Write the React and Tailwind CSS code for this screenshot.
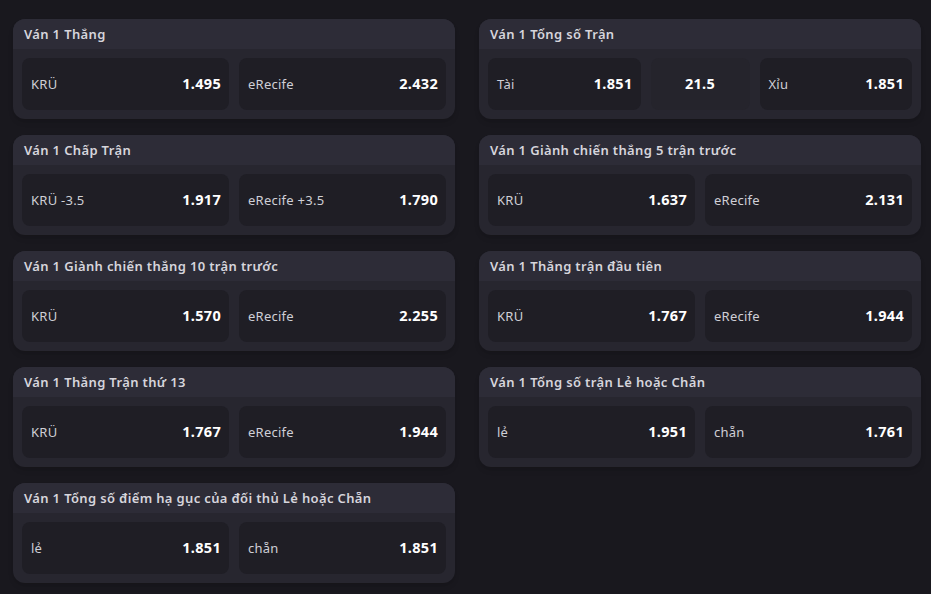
import React from "react";

const left = [
  {
    title: "Ván 1 Thắng",
    cells: [
      { label: "KRÜ", value: "1.495" },
      { label: "eRecife", value: "2.432" },
    ],
  },
  {
    title: "Ván 1 Chấp Trận",
    cells: [
      { label: "KRÜ -3.5", value: "1.917" },
      { label: "eRecife +3.5", value: "1.790" },
    ],
  },
  {
    title: "Ván 1 Giành chiến thắng 10 trận trước",
    cells: [
      { label: "KRÜ", value: "1.570" },
      { label: "eRecife", value: "2.255" },
    ],
  },
  {
    title: "Ván 1 Thắng Trận thứ 13",
    cells: [
      { label: "KRÜ", value: "1.767" },
      { label: "eRecife", value: "1.944" },
    ],
  },
  {
    title: "Ván 1 Tổng số điểm hạ gục của đối thủ Lẻ hoặc Chẵn",
    cells: [
      { label: "lẻ", value: "1.851" },
      { label: "chẵn", value: "1.851" },
    ],
  },
];

const right = [
  {
    title: "Ván 1 Tổng số Trận",
    cells: [
      { label: "Tài", value: "1.851" },
      { line: "21.5" },
      { label: "Xỉu", value: "1.851" },
    ],
  },
  {
    title: "Ván 1 Giành chiến thắng 5 trận trước",
    cells: [
      { label: "KRÜ", value: "1.637" },
      { label: "eRecife", value: "2.131" },
    ],
  },
  {
    title: "Ván 1 Thắng trận đầu tiên",
    cells: [
      { label: "KRÜ", value: "1.767" },
      { label: "eRecife", value: "1.944" },
    ],
  },
  {
    title: "Ván 1 Tổng số trận Lẻ hoặc Chẵn",
    cells: [
      { label: "lẻ", value: "1.951" },
      { label: "chẵn", value: "1.761" },
    ],
  },
];

const Market = ({ title, cells }) => (
  <div className="h-[100px] rounded-xl bg-[#27262f] overflow-hidden shadow-md">
    <div className="h-[30px] flex items-center pt-[2px] px-[11px] bg-[#2d2c37] text-[13px] font-semibold tracking-[0.35px] text-[#d6d5dc]">
      {title}
    </div>
    <div className="flex gap-[10px] p-[9px]">
      {cells.map((c, i) =>
        c.line ? (
          <div
            key={i}
            className="w-[99px] shrink-0 h-[52px] rounded-lg bg-[#25242c] flex items-center justify-center text-[14.5px] font-bold tracking-[0.3px] text-white"
          >
            {c.line}
          </div>
        ) : (
          <div
            key={i}
            className="flex-1 h-[52px] rounded-lg bg-[#1f1e25] flex items-center justify-between pl-[9px] pr-[8px]"
          >
            <span className="text-[13px] tracking-[0.25px] text-[#cfcfd6] pt-[1px]">{c.label}</span>
            <span className="text-[14.5px] font-bold tracking-[0.3px] text-white">{c.value}</span>
          </div>
        ),
      )}
    </div>
  </div>
);

export default function App() {
  return (
    <div
      className="min-h-[594px] bg-[#19181e] pt-[19px] pl-[13px] pr-[10px] flex gap-[24px]"
      style={{ fontFamily: '"Noto Sans", Inter, sans-serif' }}
    >
      <div className="w-[442px] flex flex-col gap-[16px]">
        {left.map((m) => (
          <Market key={m.title} {...m} />
        ))}
      </div>
      <div className="w-[442px] flex flex-col gap-[16px]">
        {right.map((m) => (
          <Market key={m.title} {...m} />
        ))}
      </div>
    </div>
  );
}
